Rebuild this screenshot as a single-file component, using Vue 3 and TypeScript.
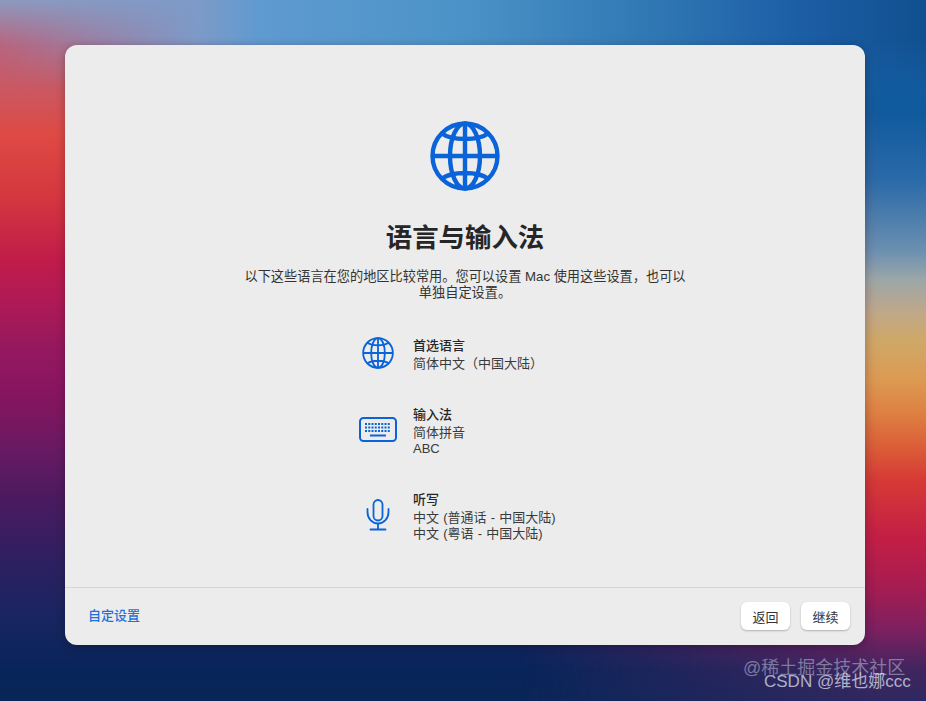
<template>
  <div class="desktop">
    <div class="window">
      <div class="content">
        <svg class="hero-globe" viewBox="0 0 70 70" fill="none" stroke="#0a63d8" stroke-width="4.4">
          <circle cx="35" cy="35" r="32.5" />
          <ellipse cx="35" cy="35" rx="15" ry="32.5" />
          <path d="M35 2.5V67.5M2.5 35H67.5M11 12C22 20 48 20 59 12M11 58C22 50 48 50 59 58" />
        </svg>
        <h1 class="title">语言与输入法</h1>
        <p class="desc">以下这些语言在您的地区比较常用。您可以设置 Mac 使用这些设置，也可以<br />单独自定设置。</p>

        <div class="rows">
          <div v-for="row in rows" :key="row.title" class="row">
            <div class="row-icon">
              <svg v-if="row.kind === 'globe'" width="32" height="32" viewBox="0 0 70 70" fill="none" stroke="#0a63d8" stroke-width="4">
                <circle cx="35" cy="35" r="32.5" />
                <ellipse cx="35" cy="35" rx="15" ry="32.5" />
                <path d="M35 2.5V67.5M2.5 35H67.5M11 12C22 20 48 20 59 12M11 58C22 50 48 50 59 58" />
              </svg>
              <svg v-else-if="row.kind === 'keyboard'" width="38" height="25" viewBox="0 0 38 25" fill="none">
                <rect x="1" y="1" width="36" height="23" rx="3.5" stroke="#0a63d8" stroke-width="2" />
                <path d="M6 7H32M6 10.5H32M6 14H32" stroke="#0a63d8" stroke-width="2" stroke-dasharray="2 1.25" />
                <path d="M11 18.5H27" stroke="#0a63d8" stroke-width="2" />
              </svg>
              <svg v-else width="24" height="32" viewBox="0 0 24 32" fill="none" stroke="#0a63d8" stroke-width="1.8" stroke-linecap="round">
                <rect x="7.5" y="1" width="9" height="20.5" rx="4.5" />
                <path d="M1.5 10V13C1.5 19.5 6 24.5 12 24.5C18 24.5 22.5 19.5 22.5 13V10M12 24.5V30.5M4.5 30.5H19.5" />
              </svg>
            </div>
            <div class="row-text">
              <div class="row-title">{{ row.title }}</div>
              <div v-for="line in row.lines" :key="line">{{ line }}</div>
            </div>
          </div>
        </div>
      </div>

      <div class="footer">
        <a class="custom-link">自定设置</a>
        <div class="buttons">
          <button class="btn">返回</button>
          <button class="btn">继续</button>
        </div>
      </div>
    </div>

    <div class="watermark">
      <div class="mark-top">@稀土掘金技术社区</div>
      <div class="mark-bottom">CSDN @维也娜ccc</div>
    </div>
  </div>
</template>

<script setup lang="ts">
const rows = [
  { kind: 'globe', title: '首选语言', lines: ['简体中文（中国大陆）'] },
  { kind: 'keyboard', title: '输入法', lines: ['简体拼音', 'ABC'] },
  { kind: 'mic', title: '听写', lines: ['中文 (普通话 - 中国大陆)', '中文 (粤语 - 中国大陆)'] },
]
</script>

<style>
html,
body {
  margin: 0;
  height: 100%;
  overflow: hidden;
}
</style>

<style scoped>
.desktop {
  position: relative;
  width: 926px;
  height: 701px;
  box-sizing: border-box;
  padding: 45px 61px 56px 65px;
  font-family: "Liberation Sans", "Noto Sans CJK SC", sans-serif;
  overflow: hidden;
  background: linear-gradient(180deg,
    #8d9abf 0,
    #b8657f 45px,
    #de4a44 134px,
    #d4363f 200px,
    #c01c4a 260px,
    #b01a55 300px,
    #94185f 350px,
    #85155f 400px,
    #681a62 450px,
    #4a1a60 500px,
    #2e2060 560px,
    #182560 620px,
    #08255a 670px,
    #0a2658 701px);
}

/* right side of the wallpaper, faded in over the left side */
.desktop::before {
  content: "";
  position: absolute;
  inset: 0;
  background: linear-gradient(180deg,
    #1a5fa5 0,
    #0f5a9c 112px,
    #2a6aa8 180px,
    #6a8fb0 250px,
    #9ca7a8 280px,
    #c0a888 313px,
    #cfa868 340px,
    #dc9a52 380px,
    #de8042 413px,
    #db5f38 446px,
    #d63a35 480px,
    #c41f45 536px,
    #a81c50 585px,
    #7d2060 630px,
    #40255f 670px,
    #2f2860 701px);
  -webkit-mask-image: linear-gradient(90deg, transparent 520px, #000 880px);
  mask-image: linear-gradient(90deg, transparent 520px, #000 880px);
}

/* blue band along the top edge */
.desktop::after {
  content: "";
  position: absolute;
  inset: 0 0 auto 0;
  height: 90px;
  background: linear-gradient(90deg,
    rgba(125, 154, 200, 0) 0,
    #7d9ac8 200px,
    #5f9ad0 260px,
    #4c94c8 450px,
    #3078b4 650px,
    #1c5ea5 800px,
    #11508f 926px);
  -webkit-mask-image: linear-gradient(180deg, #000 40px, transparent 90px);
  mask-image: linear-gradient(180deg, #000 40px, transparent 90px);
}

.window {
  position: relative;
  z-index: 1;
  width: 800px;
  height: 600px;
  display: flex;
  flex-direction: column;
  background: #ececec;
  border-radius: 12px;
  box-shadow: 0 2px 10px rgba(0, 0, 0, 0.28);
  overflow: hidden;
}

.content {
  flex: 1;
  display: flex;
  flex-direction: column;
  align-items: center;
  padding-top: 76px;
}

.hero-globe {
  width: 70px;
  height: 70px;
}

.title {
  margin: 29px 0 0;
  font-size: 26.4px;
  line-height: 36px;
  font-weight: 700;
  color: #262626;
}

.desc {
  margin: 13px 0 0;
  width: 470px;
  font-size: 13.2px;
  line-height: 16px;
  color: #333;
  text-align: center;
}

.rows {
  margin-top: 36px;
  width: 222px;
  display: flex;
  flex-direction: column;
  gap: 34px;
}

.row {
  display: flex;
  align-items: center;
  font-size: 13px;
  line-height: 16px;
  word-spacing: 0.6px;
  color: #3a3a3a;
}

.row-icon {
  width: 48px;
  margin: -2px 11px 2px 0;
  display: flex;
  justify-content: center;
}

.row-title {
  font-weight: 500;
  color: #262626;
  line-height: 18px;
  margin-bottom: 1px;
}

.footer {
  height: 58px;
  flex-shrink: 0;
  box-sizing: border-box;
  border-top: 1px solid #d6d6d6;
  display: flex;
  align-items: center;
  justify-content: space-between;
  padding: 0 15px 1px 23px;
}

.custom-link {
  margin-bottom: 4px;
  font-size: 13px;
  font-weight: 500;
  color: #1f70d8;
}

.buttons {
  display: flex;
  gap: 11px;
}

.btn {
  width: 49px;
  height: 28px;
  padding: 0;
  border: none;
  border-radius: 6px;
  background: #fff;
  box-shadow: 0 1px 2px rgba(0, 0, 0, 0.25);
  font-family: inherit;
  font-size: 13px;
  color: #333;
}

.watermark {
  position: absolute;
  z-index: 1;
  left: 743px;
  top: 657px;
  font-size: 18px;
  line-height: 22px;
  color: rgba(200, 205, 225, 0.5);
}

.mark-top {
  white-space: nowrap;
}

.mark-bottom {
  margin-top: -8px;
  margin-left: 21px;
  font-size: 17px;
  white-space: nowrap;
  color: rgba(220, 225, 240, 0.75);
}
</style>
